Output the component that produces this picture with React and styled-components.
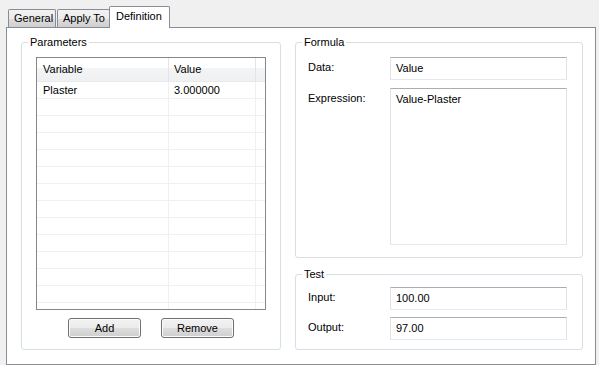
import styled, { createGlobalStyle } from "styled-components";

const GlobalStyle = createGlobalStyle`
  html, body {
    margin: 0;
    background: #f0f0f0;
  }
  body {
    font-family: "Liberation Sans", Arial, sans-serif;
    font-size: 11px;
    color: #000;
  }
  * {
    box-sizing: border-box;
  }
`;

const Window = styled.div`
  width: 599px;
  height: 365px;
  padding: 6px 3px 0 6px;
  display: flex;
  flex-direction: column;
`;

const TabBar = styled.div`
  display: flex;
  align-items: flex-end;
  height: 21px;
  padding-left: 2px;
`;

const Tab = styled.div`
  position: relative;
  z-index: ${(p) => (p.$active ? 2 : 1)};
  width: ${(p) => p.$width}px;
  height: ${(p) => (p.$active ? 22 : 18)}px;
  margin-left: ${(p) => p.$offset}px;
  margin-bottom: ${(p) => (p.$active ? -1 : 0)}px;
  border: 1px solid #898c95;
  border-bottom: none;
  border-radius: 2px 2px 0 0;
  padding: ${(p) => (p.$active ? "3px 0 0 6px" : "2px 0 0 5px")};
  line-height: 13px;
  background: ${(p) =>
    p.$active
      ? "#ffffff"
      : "linear-gradient(#f2f2f2 0%, #ebebeb 50%, #dddddd 51%, #cfcfcf 100%)"};
  white-space: nowrap;
`;

const Pane = styled.div`
  width: 590px;
  height: 338px;
  border: 1px solid #898c95;
  background: #ffffff;
  padding: 8px 12px 14px 14px;
  display: grid;
  grid-template-columns: 260px 288px;
  grid-template-rows: minmax(0, 1fr);
  column-gap: 14px;
`;

const Column = styled.div`
  display: flex;
  flex-direction: column;
  gap: 10px;
  min-height: 0;
`;

const Group = styled.fieldset`
  margin: 0;
  padding: 0;
  min-width: 0;
  min-height: 0;
  border: 1px solid #d5dfe5;
  border-radius: 3px;
  display: flex;
  flex-direction: column;
  flex: ${(p) => (p.$grow ? "1 1 0" : "none")};
`;

const Legend = styled.legend`
  margin-left: 6px;
  padding: 0 2px;
  line-height: 13px;
  height: 13px;
`;

const GroupBody = styled.div`
  flex: ${(p) => (p.$fill ? "1 1 0" : "none")};
  min-height: 0;
  display: flex;
  flex-direction: column;
  padding: ${(p) => p.$pad};
`;

const Table = styled.div`
  flex: 1 1 0;
  min-height: 0;
  border: 1px solid #828790;
  overflow: hidden;
  background: #ffffff;
`;

const HeaderRow = styled.div`
  display: grid;
  grid-template-columns: 132px 87px 1fr;
  height: 24px;
  background: linear-gradient(#ffffff 0%, #ffffff 42%, #f3f4f6 43%, #eff0f2 100%);
  border-bottom: 1px solid #e8e9ec;
`;

const HeaderCell = styled.div`
  padding: 5px 0 0 ${(p) => p.$pad}px;
  line-height: 13px;
  border-right: 1px solid ${(p) => (p.$last ? "transparent" : "#e3e4e6")};
`;

const BodyRow = styled.div`
  display: grid;
  grid-template-columns: 132px 87px 1fr;
  height: 17px;
  border-bottom: 1px solid #f0f0f0;
`;

const Cell = styled.div`
  padding: 2px 0 0 ${(p) => p.$pad}px;
  line-height: 13px;
  border-right: 1px solid ${(p) => (p.$last ? "transparent" : "#f0f0f0")};
`;

const ButtonRow = styled.div`
  display: flex;
  justify-content: center;
  gap: 20px;
  margin-top: 8px;
`;

const Button = styled.button`
  width: 73px;
  height: 20px;
  padding: 0;
  font: inherit;
  color: #000;
  border: 1px solid #707070;
  border-radius: 3px;
  background: linear-gradient(#f2f2f2 0%, #ebebeb 50%, #dddddd 51%, #cfcfcf 100%);
  box-shadow: inset 0 0 0 1px #fcfcfc;
`;

const FieldGrid = styled.div`
  flex: ${(p) => (p.$fill ? "1 1 0" : "none")};
  min-height: 0;
  display: grid;
  grid-template-columns: 82px 177px;
  grid-template-rows: ${(p) => p.$rows};
  row-gap: ${(p) => p.$gap}px;
`;

const Label = styled.div`
  padding-top: 4px;
  line-height: 13px;
`;

const Field = styled.div`
  border: 1px solid #e2e3ea;
  border-top-color: #abadb3;
  border-bottom-color: #e3e9ef;
  padding: 4px 0 0 5px;
  line-height: 13px;
  background: #ffffff;
  white-space: pre-wrap;
`;

const rows = [{ name: "Plaster", value: "3.000000" }];
const emptyRows = Array.from({ length: 13 });

export default function App() {
  return (
    <>
      <GlobalStyle />
      <Window>
        <TabBar>
          <Tab $width={48} $offset={0}>General</Tab>
          <Tab $width={53} $offset={1}>Apply To</Tab>
          <Tab $width={61} $offset={-1} $active>Definition</Tab>
        </TabBar>
        <Pane>
          <Group>
            <Legend>Parameters</Legend>
            <GroupBody $fill $pad="8px 14px 11px 14px">
              <Table>
                <HeaderRow>
                  <HeaderCell $pad={6}>Variable</HeaderCell>
                  <HeaderCell $pad={5}>Value</HeaderCell>
                  <HeaderCell $last />
                </HeaderRow>
                {rows.map((r) => (
                  <BodyRow key={r.name}>
                    <Cell $pad={6}>{r.name}</Cell>
                    <Cell $pad={5}>{r.value}</Cell>
                    <Cell $last />
                  </BodyRow>
                ))}
                {emptyRows.map((_, i) => (
                  <BodyRow key={i}>
                    <Cell />
                    <Cell />
                    <Cell $last />
                  </BodyRow>
                ))}
              </Table>
              <ButtonRow>
                <Button>Add</Button>
                <Button>Remove</Button>
              </ButtonRow>
            </GroupBody>
          </Group>
          <Column>
            <Group $grow>
              <Legend>Formula</Legend>
              <GroupBody $fill $pad="8px 14px 12px 12px">
                <FieldGrid $fill $rows="23px 1fr" $gap={8}>
                  <Label>Data:</Label>
                  <Field>Value</Field>
                  <Label>Expression:</Label>
                  <Field>Value-Plaster</Field>
                </FieldGrid>
              </GroupBody>
            </Group>
            <Group>
              <Legend>Test</Legend>
              <GroupBody $pad="6px 14px 9px 12px">
                <FieldGrid $rows="23px 23px" $gap={7}>
                  <Label>Input:</Label>
                  <Field>100.00</Field>
                  <Label>Output:</Label>
                  <Field>97.00</Field>
                </FieldGrid>
              </GroupBody>
            </Group>
          </Column>
        </Pane>
      </Window>
    </>
  );
}
